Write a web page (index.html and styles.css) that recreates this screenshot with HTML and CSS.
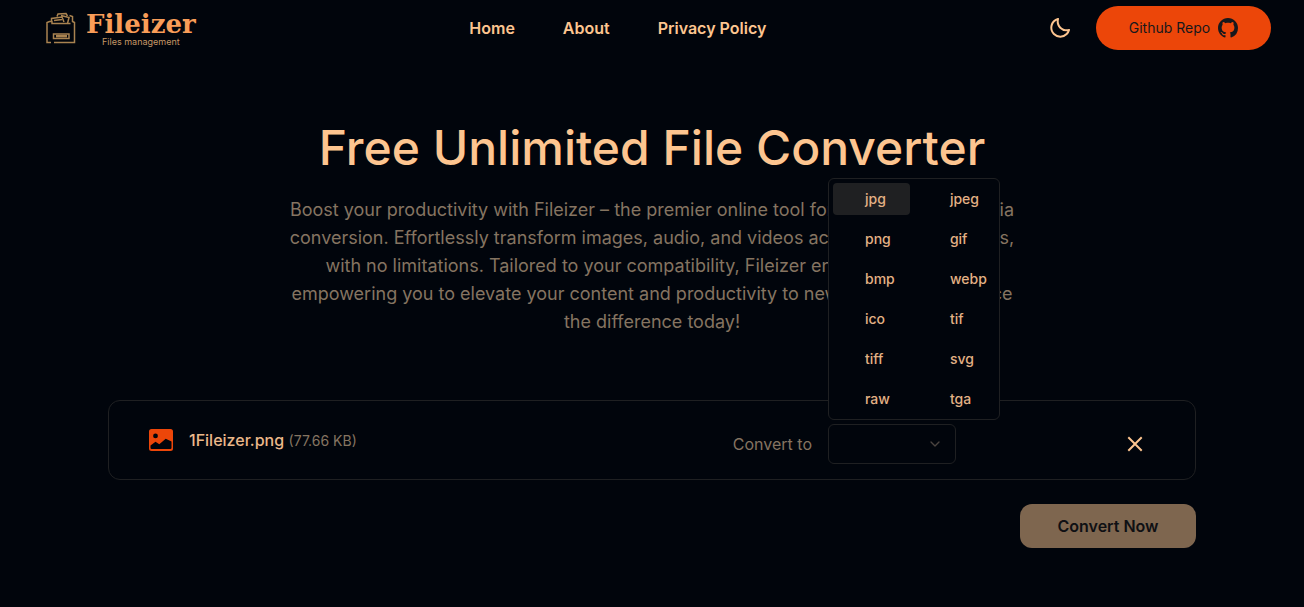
FILE: index.html
```html
<!DOCTYPE html>
<html lang="en">
<head>
<meta charset="utf-8">
<meta name="viewport" content="width=device-width, initial-scale=1">
<title>Fileizer</title>
<link rel="stylesheet" href="styles.css">
</head>
<body>
<header class="header">
  <a class="logo" href="#">
    <svg class="logo-mark" viewBox="0 0 30 32" fill="none" stroke="currentColor" stroke-width="1.5" aria-hidden="true">
      <path d="M5 30.500H1V10.500L3.500 9.500H6V11.500H24.500M8 30.500H28.500V10.500L26.500 9.500V4.500L23.500 3.500"/>
      <path d="M5.500 9V6.500L16 5L18 10M8 8.500L16 7.500M11 4.500L12 2L20 1.500L21.500 4M15 3.500L23 5.500L21.500 11.500"/>
      <rect x="7.500" y="22" width="15.500" height="4.500"/>
      <path d="M10 24.200H21" stroke-width="2.500"/>
    </svg>
    <span class="logo-text">
      <span class="logo-name">Fileizer</span>
      <span class="logo-tag">Files management</span>
    </span>
  </a>
  <nav class="nav">
    <a href="#">Home</a>
    <a href="#">About</a>
    <a href="#">Privacy Policy</a>
  </nav>
  <div class="actions">
    <button class="icon-button" type="button" aria-label="Toggle theme">
      <svg width="24" height="24" viewBox="0 0 24 24" fill="currentColor" aria-hidden="true"><path d="M20.742 13.045a8.088 8.088 0 0 1-2.077.271c-2.135 0-4.140-.830-5.646-2.336a8.025 8.025 0 0 1-2.064-7.723A1 1 0 0 0 9.730 2.034a10.014 10.014 0 0 0-4.489 2.582c-3.898 3.898-3.898 10.243 0 14.143a9.937 9.937 0 0 0 7.072 2.930 9.930 9.930 0 0 0 7.070-2.929 10.007 10.007 0 0 0 2.583-4.491 1.001 1.001 0 0 0-1.224-1.224zm-2.772 4.301a7.947 7.947 0 0 1-5.656 2.343 7.953 7.953 0 0 1-5.658-2.344c-3.118-3.119-3.118-8.195 0-11.314a7.923 7.923 0 0 1 2.060-1.483 10.027 10.027 0 0 0 2.890 7.848 9.972 9.972 0 0 0 7.848 2.891 8.036 8.036 0 0 1-1.484 2.059z"/></svg>
    </button>
    <a class="repo" href="#">Github Repo
      <svg width="20" height="20" viewBox="0 0 16 16" fill="currentColor" aria-hidden="true"><path d="M8 0C3.580 0 0 3.580 0 8c0 3.540 2.290 6.530 5.470 7.590.4.070.55-.17.55-.38 0-.19-.01-.82-.01-1.490-2.010.37-2.530-.49-2.690-.94-.09-.23-.48-.94-.82-1.130-.28-.15-.68-.52-.01-.53.63-.01 1.080.58 1.230.82.72 1.210 1.870.87 2.330.66.07-.52.28-.87.51-1.070-1.780-.2-3.640-.89-3.640-3.950 0-.87.31-1.590.82-2.150-.08-.2-.36-1.020.08-2.120 0 0 .67-.21 2.200.82.64-.18 1.320-.27 2-.27s1.360.09 2 .27c1.530-1.040 2.200-.82 2.200-.82.44 1.100.16 1.920.08 2.120.51.56.82 1.270.82 2.150 0 3.070-1.870 3.750-3.650 3.950.29.25.54.73.54 1.480 0 1.070-.01 1.930-.01 2.200 0 .21.15.46.55.38A8.010 8.010 0 0 0 16 8c0-4.420-3.580-8-8-8z"/></svg>
    </a>
  </div>
</header>
<main class="main">
  <section class="intro">
    <h1>Free Unlimited File Converter</h1>
    <p>Boost your productivity with Fileizer – the premier online tool for unlimited multimedia conversion. Effortlessly transform images, audio, and videos according to your goals, with no limitations. Tailored to your compatibility, Fileizer ensures top results, empowering you to elevate your content and productivity to new heights. Experience the difference today!</p>
  </section>
  <section class="converter">
    <div class="card">
      <div class="file">
        <svg width="24" height="22" viewBox="0 0 24 22" aria-hidden="true">
          <path fill="currentColor" fill-rule="evenodd" d="M2.500 0h19A2.500 2.500 0 0 1 24 2.500v17a2.500 2.500 0 0 1-2.500 2.500h-19A2.500 2.500 0 0 1 0 19.500v-17A2.500 2.500 0 0 1 2.500 0zM6.500 4.500a2.400 2.400 0 1 0 0 4.800a2.400 2.400 0 0 0 0-4.800zM1.500 16.500v2.300q0 1.200 1.200 1.200h18.600q1.200 0 1.200-1.200v-6.300L16.700 9.700L10.300 15.300L6.500 12.700z"/>
        </svg>
        <span class="file-text"><span class="file-name">1Fileizer.png</span> <span class="file-size">(77.66 KB)</span></span>
      </div>
      <div class="target">
        <label for="format">Convert to</label>
        <div class="select">
          <select id="format"><option></option></select>
          <svg class="chevron" width="16" height="16" viewBox="0 0 24 24" fill="none" stroke="currentColor" stroke-width="2" stroke-linecap="round" stroke-linejoin="round" aria-hidden="true"><path d="m6 9 6 6 6-6"/></svg>
          <div class="menu" role="listbox" aria-label="Format">
            <button class="option active" type="button" role="option" aria-selected="true">jpg</button>
            <button class="option" type="button" role="option">jpeg</button>
            <button class="option" type="button" role="option">png</button>
            <button class="option" type="button" role="option">gif</button>
            <button class="option" type="button" role="option">bmp</button>
            <button class="option" type="button" role="option">webp</button>
            <button class="option" type="button" role="option">ico</button>
            <button class="option" type="button" role="option">tif</button>
            <button class="option" type="button" role="option">tiff</button>
            <button class="option" type="button" role="option">svg</button>
            <button class="option" type="button" role="option">raw</button>
            <button class="option" type="button" role="option">tga</button>
          </div>
        </div>
      </div>
      <button class="icon-button" type="button" aria-label="Remove file">
        <svg width="24" height="24" viewBox="0 0 24 24" fill="none" stroke="currentColor" stroke-width="2" stroke-linecap="square" aria-hidden="true"><path d="M6 6 18 18M18 6 6 18"/></svg>
      </button>
    </div>
    <button class="convert" type="button" disabled>Convert Now</button>
  </section>
</main>
</body>
</html>
```
FILE: styles.css
```css
:root {
  --bg: #01050c;
  --line: #1f2022;
  --peach: #fdc590;
  --muted: #857461;
  --accent: #ec4609;
}

* {
  box-sizing: border-box;
}

body {
  margin: 0;
  background: var(--bg);
  color: var(--peach);
  font-family: Inter, "Liberation Sans", sans-serif;
  font-size: 16px;
  line-height: 24px;
}

a {
  color: inherit;
  text-decoration: none;
}

button,
select {
  font: inherit;
  color: inherit;
}

svg {
  display: block;
  flex: none;
}

.header {
  display: flex;
  justify-content: space-between;
  align-items: center;
  padding: 6px 33px 6px 46px;
}

.logo {
  display: flex;
  align-items: center;
  gap: 10px;
}

.logo-mark {
  width: 30px;
  height: 32px;
  color: #a98350;
}

.logo-text {
  display: flex;
  flex-direction: column;
}

.logo-name {
  color: #f99d58;
  font: bold 26px/28px "DejaVu Serif", serif;
}

.logo-tag {
  padding-left: 16px;
  color: #c49766;
  font: 9px/8px Inter, sans-serif;
}

.nav {
  display: flex;
  gap: 48px;
  font-weight: 600;
}

.actions {
  display: flex;
  align-items: center;
  gap: 16px;
}

.icon-button {
  display: grid;
  place-items: center;
  width: 40px;
  height: 40px;
  padding: 0;
  border: 0;
  background: none;
}

.repo {
  display: flex;
  justify-content: center;
  align-items: center;
  gap: 8px;
  min-width: 175px;
  padding: 10px 24px;
  border-radius: 22px;
  background: var(--accent);
  color: #17181c;
  font-size: 14px;
}

.main {
  max-width: 1152px;
  margin: 0 auto;
  padding: 68px 32px 48px;
}

.intro {
  max-width: 736px;
  margin: 0 auto 64px;
  text-align: center;
}

.intro h1 {
  margin: 0 0 24px;
  font-size: 48px;
  font-weight: 500;
  line-height: 48px;
}

.intro p {
  margin: 0;
  color: var(--muted);
  font-size: 18px;
  line-height: 28px;
}

.converter {
  display: flex;
  flex-direction: column;
  align-items: flex-end;
  gap: 24px;
}

.card {
  display: flex;
  align-items: flex-start;
  gap: 159px;
  width: 100%;
  padding: 23px 40px 15px;
  border: 1px solid var(--line);
  border-radius: 12px;
}

.file {
  display: flex;
  flex: 1;
  align-items: center;
  gap: 16px;
  height: 32px;
  color: var(--accent);
  white-space: nowrap;
}

.file-name {
  color: #ebb88a;
  font-weight: 500;
}

.file-size {
  color: var(--muted);
  font-size: 14px;
}

.target {
  display: flex;
  align-items: center;
  gap: 16px;
  color: var(--muted);
}

.select {
  position: relative;
}

.select select {
  display: block;
  width: 128px;
  height: 40px;
  border: 1px solid var(--line);
  border-radius: 6px;
  background: var(--bg);
  appearance: none;
}

.chevron {
  position: absolute;
  top: 12px;
  right: 13px;
  color: #4b4440;
}

.menu {
  position: absolute;
  bottom: 44px;
  left: 0;
  display: grid;
  grid-template-columns: 1fr 1fr;
  gap: 8px;
  width: max-content;
  padding: 4px;
  border: 1px solid var(--line);
  border-radius: 6px;
  background: var(--bg);
}

.option {
  padding: 6px 8px 6px 32px;
  border: 0;
  border-radius: 4px;
  background: none;
  color: #e3b185;
  font-size: 14px;
  font-weight: 500;
  line-height: 20px;
  text-align: left;
}

.option.active {
  background: var(--line);
}

.convert {
  min-width: 176px;
  padding: 10px 32px;
  border: 0;
  border-radius: 12px;
  background: #7e664f;
  color: #0f1014;
  font-weight: 600;
}
```
